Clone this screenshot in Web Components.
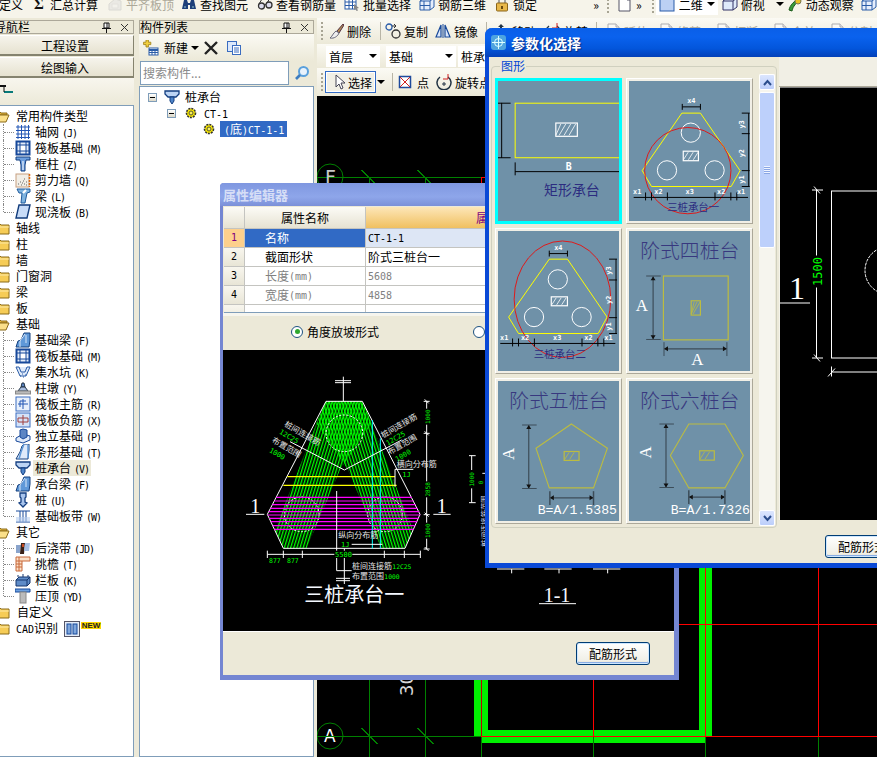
<!DOCTYPE html>
<html lang="zh">
<head>
<meta charset="utf-8">
<title>参数化选择</title>
<style>
  html, body { margin: 0; padding: 0; background: #ece9d8; overflow: hidden; }
  body { font: 12px "Noto Sans CJK SC", "Liberation Sans", sans-serif; color: #000; }
</style>
</head>
<body>
<app-frame>
  <top-bar slot="top">
    <tool-item style="margin-left:-1px">定义</tool-item>
    <tool-item icon="sigma" style="margin-left:8px">汇总计算</tool-item>
    <tool-item icon="flush" disabled style="margin-left:9px">平齐板顶</tool-item>
    <tool-item icon="binoculars" style="margin-left:7px">查找图元</tool-item>
    <tool-item icon="glasses" style="margin-left:9px">查看钢筋量</tool-item>
    <tool-item icon="batch" style="margin-left:8px">批量选择</tool-item>
    <tool-item icon="cube3d" style="margin-left:8px">钢筋三维</tool-item>
    <tool-item icon="lock" style="margin-left:8px">锁定</tool-item>
    <tool-item style="margin-left:56px">»</tool-item>
    <tool-grip style="margin-left:8px"></tool-grip>
    <tool-item icon="doc" style="margin-left:7px"></tool-item>
    <tool-item style="margin-left:4px">»</tool-item>
    <tool-grip style="margin-left:10px"></tool-grip>
    <combo-box icon="plane" width="62" style="margin-left:2px">二维</combo-box>
    <tool-item icon="view" style="margin-left:4px">俯视<drop-arrow style="margin-left:8px"></drop-arrow></tool-item>
    <tool-item icon="orbit" style="margin-left:3px">动态观察</tool-item>
    <tool-item icon="cube3d" style="margin-left:7px"></tool-item>
  </top-bar>

  <dock-panel slot="nav" heading="导航栏" clipped>
    <nav-button>工程设置</nav-button>
    <nav-button>绘图输入</nav-button>
    <mini-bar><app-icon name="rows" style="margin-left:-1px"></app-icon></mini-bar>
    <tree-view nav>
      <tree-row folder open>常用构件类型</tree-row>
      <tree-row icon="axis" hot="J" link>轴网</tree-row>
      <tree-row icon="raft" hot="M" link>筏板基础</tree-row>
      <tree-row icon="column" hot="Z" link>框柱</tree-row>
      <tree-row icon="wall" hot="Q" link>剪力墙</tree-row>
      <tree-row icon="beam" hot="L" link>梁</tree-row>
      <tree-row icon="slab" hot="B" link last>现浇板</tree-row>
      <tree-row folder>轴线</tree-row>
      <tree-row folder>柱</tree-row>
      <tree-row folder>墙</tree-row>
      <tree-row folder>门窗洞</tree-row>
      <tree-row folder>梁</tree-row>
      <tree-row folder>板</tree-row>
      <tree-row folder open>基础</tree-row>
      <tree-row icon="footbeam" hot="F" link>基础梁</tree-row>
      <tree-row icon="raft" hot="M" link>筏板基础</tree-row>
      <tree-row icon="sump" hot="K" link>集水坑</tree-row>
      <tree-row icon="pier" hot="Y" link>柱墩</tree-row>
      <tree-row icon="rebarmain" hot="R" link>筏板主筋</tree-row>
      <tree-row icon="rebarneg" hot="X" link>筏板负筋</tree-row>
      <tree-row icon="isolated" hot="P" link>独立基础</tree-row>
      <tree-row icon="strip" hot="T" link>条形基础</tree-row>
      <tree-row icon="cap" hot="V" link active>桩承台</tree-row>
      <tree-row icon="footbeam" hot="F" link>承台梁</tree-row>
      <tree-row icon="pile" hot="U" link>桩</tree-row>
      <tree-row icon="band" hot="W" link last>基础板带</tree-row>
      <tree-row folder open>其它</tree-row>
      <tree-row icon="postcast" hot="JD" link>后浇带</tree-row>
      <tree-row icon="eave" hot="T" link>挑檐</tree-row>
      <tree-row icon="rail" hot="K" link>栏板</tree-row>
      <tree-row icon="coping" hot="YD" link last>压顶</tree-row>
      <tree-row folder><span style="margin-left:1px">自定义</span></tree-row>
      <tree-row folder><mono-text>CAD</mono-text>识别<app-icon name="panels" style="margin:0 0 0 6px;vertical-align:-4px"></app-icon><new-badge></new-badge></tree-row>
    </tree-view>
  </dock-panel>

  <dock-panel slot="list" heading="构件列表">
    <list-tools></list-tools>
    <search-box>搜索构件...</search-box>
    <tree-view boxed>
      <tree-row icon="cap" box style="--indent:8px">桩承台</tree-row>
      <tree-row icon="gear" box style="--indent:27px"><mono-text>CT-1</mono-text></tree-row>
      <tree-row icon="gear" selected style="--indent:61px"><mono-text>(</mono-text>底<mono-text style="margin-left:-6px">)CT-1-1</mono-text></tree-row>
    </tree-view>
  </dock-panel>

  <tool-row slot="work" h="26">
    <tool-grip style="margin-left:4px"></tool-grip>
    <tool-item icon="brush" style="margin-left:5px">删除</tool-item>
    <tool-sep style="margin-left:9px"></tool-sep>
    <tool-item icon="copyrings" style="margin-left:4px">复制</tool-item>
    <tool-item icon="mirror" style="margin-left:7px">镜像</tool-item>
    <tool-sep style="margin-left:8px"></tool-sep>
    <tool-item icon="moveit" style="margin-left:6px">移动</tool-item>
    <tool-item icon="rotate" style="margin-left:9px">旋转</tool-item>
    <tool-sep style="margin-left:8px"></tool-sep>
    <tool-item icon="doc" disabled style="margin-left:8px">延伸</tool-item>
    <tool-item icon="doc" disabled style="margin-left:10px">修剪</tool-item>
    <tool-item icon="doc" disabled style="margin-left:14px">打断</tool-item>
    <tool-item icon="doc" disabled style="margin-left:14px">合并</tool-item>
    <tool-item icon="doc" disabled style="margin-left:14px">分割</tool-item>
  </tool-row>
  <tool-row slot="work" h="24">
    <combo-box width="54" style="margin-left:9px">首层</combo-box>
    <combo-box width="70" style="margin-left:6px">基础</combo-box>
    <combo-box width="70" style="margin-left:2px">桩承台</combo-box>
  </tool-row>
  <tool-row slot="work" h="28">
    <tool-grip style="margin-left:4px"></tool-grip>
    <tool-item icon="cursor" pressed style="margin-left:2px">选择</tool-item>
    <drop-arrow style="margin-left:1px"></drop-arrow>
    <tool-sep style="margin-left:7px"></tool-sep>
    <tool-item icon="point" style="margin-left:4px"><span style="margin-left:1px">点</span></tool-item>
    <tool-item icon="rotate" style="margin-left:7px">旋转点</tool-item>
  </tool-row>
  <cad-plan slot="canvas"></cad-plan>

  <float-window slot="windows" heading="属性编辑器" style="left:220px;top:183px;width:459px;height:497px">
    <prop-table></prop-table>
    <radio-bar></radio-bar>
    <section-drawing></section-drawing>
    <action-bar><push-button style="margin-left:353px">配筋形式</push-button></action-bar>
  </float-window>

  <float-window slot="windows" active heading="参数化选择" style="left:485px;top:28px;width:410px;height:540px">
    <param-body>
      <shape-tile slot="tile" kind="rect" selected></shape-tile>
      <shape-tile slot="tile" kind="tri1"></shape-tile>
      <shape-tile slot="tile" kind="tri2"></shape-tile>
      <shape-tile slot="tile" kind="four"></shape-tile>
      <shape-tile slot="tile" kind="five"></shape-tile>
      <shape-tile slot="tile" kind="six"></shape-tile>
      <side-drawing slot="side"></side-drawing>
      <push-button slot="action" style="margin-left:46px">配筋形式</push-button>
    </param-body>
  </float-window>
</app-frame>

<script>
const ICONS = {
  sigma: `<text x="3" y="13" font-family="Liberation Serif" font-weight="bold" font-size="15" fill="#111">Σ</text>`,
  flush: `<path d="M2 14V8l6-5 6 2v9z" fill="#ddd" stroke="#bbb"/><path d="M5 8h6v4H5z" fill="#eee" stroke="#ccc"/>`,
  binoculars: `<path d="M1 13l2-9h3l1 3h2l1-3h3l2 9h-6V9H7v4z" fill="#1d3f7a"/><path d="M3 11h2M11 11h2" stroke="#9cc" />`,
  glasses: `<circle cx="4.500" cy="10" r="3" fill="#dde" stroke="#333" stroke-width="1.300"/><circle cx="12" cy="9" r="3" fill="#dde" stroke="#333" stroke-width="1.300"/><path d="M7 9l2-.500M2 8l3-5M10 7l3-5" stroke="#333"/>`,
  batch: `<rect x="1" y="2" width="11" height="11" fill="#fff" stroke="#2a5ca8"/><path d="M1 6h11M1 9.500h11M5 2v11M8.500 2v11" stroke="#2a5ca8"/><path d="M10 8l5 4-2 .500 1 2-1.500.500-1-2-1.500 1z" fill="#888"/>`,
  cube3d: `<path d="M1 5l5-3h9v9l-4 3H1z" fill="#e6eefc" stroke="#2a5ca8"/><path d="M1 5h10v9M11 5l4-3M5 5v9M1 9.500h10" stroke="#2a5ca8" fill="none"/>`,
  lock: `<path d="M5 7V4a3 3 0 0 1 6 0v3" fill="none" stroke="#888" stroke-width="1.500"/><rect x="2.500" y="7" width="11" height="8" rx="1" fill="#e8b84a" stroke="#8a6418"/><rect x="7" y="10" width="2" height="3" fill="#6a4a10"/>`,
  doc: `<path d="M3 1h8l3 3v11H3z" fill="#fff" stroke="#556"/><path d="M11 1v3h3" fill="#dde" stroke="#556"/>`,
  plane: `<rect x="1" y="1" width="14" height="14" fill="#bcd0f4" stroke="#2a5ca8"/>`,
  view: `<path d="M1 5l4-3h10v9l-4 3H1z" fill="#dfeafa" stroke="#336"/><path d="M1 5h10v9M11 5l4-3" stroke="#336" fill="none"/>`,
  orbit: `<path d="M2 14c1-5 5-9 11-12l1 2C9 7 6 10 5 15z" fill="#3a9a3a" stroke="#1a5a1a"/><circle cx="11" cy="5" r="3" fill="#e8c020" stroke="#775"/>`,
  rows: `<path d="M0 1h7v2H0z" fill="#111"/><path d="M5 7h9v2H5z" fill="#087a7a"/><path d="M5 3v5" stroke="#111"/>`,
  axis: `<path d="M3 1v14M6.500 1v14M10 1v14M13.500 1v14M1 3h14M1 6.500h14M1 10h14M1 13.500h14" stroke="#2356b4" fill="none"/>`,
  raft: `<rect x="1.500" y="1.500" width="13" height="13" fill="#e4ecf8" stroke="#17489a" stroke-width="2"/><rect x="5" y="5" width="6" height="6" fill="#fff" stroke="#17489a"/><path d="M5 1v4M11 1v4M5 11v4M11 11v4M1 5h4M1 11h4M11 5h4M11 11h4" stroke="#17489a"/>`,
  column: `<path d="M1 1h14v3h-4l-1 5v6H6V9L5 4H1z" fill="#6c9ede" stroke="#133e80"/><path d="M7 5h2v9H7z" fill="#b8d0f0"/>`,
  wall: `<rect x="1" y="2" width="13" height="13" fill="#f2eee6" stroke="#c8a080"/><path d="M3 12h1M6 13h1M5 10h1M8 9h1M9 12h1M11 10h1M7 11h1M11 13h1M9 7h1" stroke="#666"/><path d="M14.500 2v13" stroke="#e06a10" stroke-width="1.500" stroke-dasharray="2 1"/>`,
  beam: `<path d="M2 1h13v3l-3 1-2 10H6l1-10H4z" fill="#7fb4e0" stroke="#1f5a9c"/><path d="M8 5l3-3" stroke="#fff" stroke-width="2"/>`,
  slab: `<path d="M4 1h11l-3 13H1z" fill="#c8dcf8" stroke="#123c7c" stroke-width="1.400"/>`,
  footbeam: `<path d="M1 15l2-6 3-1 3-7h6v7l-1 7z" fill="#5f98d8" stroke="#14407e"/><path d="M5 15V9l5-7M11 3v8" stroke="#d8e8fa" fill="none"/>`,
  sump: `<path d="M1 3h3l2 5h4l2-5h3M1 3l4 9h6l4-9" fill="#dfeafa" stroke="#2a5ca8"/><path d="M5 12h1M8 13h1M10 11h1M7 10h1" stroke="#2a5ca8"/>`,
  pier: `<path d="M6 7l1-4h2l1 4z" fill="#5b85c4" stroke="#234"/><path d="M3 11l3-4h4l3 4z" fill="#a8bde0" stroke="#234"/><rect x="0.500" y="11" width="15" height="3" fill="#bbb" stroke="#888"/>`,
  rebarmain: `<rect x="1" y="1" width="14" height="14" fill="#e8f0fb" stroke="#3a6cc0"/><path d="M8 3v10M3 8h10M5 5v6M5 5h6" stroke="#2356b4" fill="none"/>`,
  rebarneg: `<rect x="1" y="1" width="14" height="14" fill="#d4e2f8" stroke="#3a6cc0"/><path d="M8 3v10M3 6h10M3 10h10M3 6v4M13 6v4" stroke="#a04040" fill="none"/>`,
  isolated: `<path d="M1 10l7-4 7 2v4l-7 3-7-2z" fill="#dfeafa" stroke="#17489a"/><path d="M5 2l3-1 4 1v7l-4 2-3-2z" fill="#5b85c4" stroke="#17489a"/>`,
  strip: `<path d="M1 15l4-7 2-6 2-2h5v6l-1 9z" fill="#dfeafa" stroke="#14407e"/><path d="M9 0l-3 8-2 7M13 1v13" stroke="#5f98d8" stroke-width="1.500" fill="none"/>`,
  cap: `<path d="M1 2h14v3l-3 3H4L1 5z" fill="#bcd4f4" stroke="#133e80" stroke-width="1.300"/><path d="M6 8h4v4l-2 3-2-3z" fill="#4e84c8" stroke="#133e80"/>`,
  pile: `<path d="M5 1h6v4l-1 1v4l2 1-4 4-4-4 2-1V6L5 5z" fill="#a8c4ec" stroke="#133e80" stroke-width="1.300"/>`,
  band: `<path d="M1 3h14M1 14h14" stroke="#17489a"/><path d="M5 3v11M8 3v11M11 3v11" stroke="#17489a"/><rect x="1" y="9" width="14" height="5" fill="#b8cff0" opacity=".6"/>`,
  postcast: `<path d="M1 5h5l-1 8H1z" fill="#8aa4cc"/><path d="M6 3h4l-1 11H5z" fill="#3a2016"/><path d="M7 4h2v3H7z" fill="#c84a20"/><path d="M10 3h5l-1 8h-5z" fill="#a8c0e4"/>`,
  eave: `<path d="M1 1h14v4H7v10H1z" fill="#fbe0c8" stroke="#c8683a"/><path d="M1 5h6M1 8h6M1 11h6M4 1v14" stroke="#c8683a"/>`,
  rail: `<path d="M1 8l3-3h11v6l-3 3H1z" fill="#5f8cc8" stroke="#17366e"/><path d="M1 8h11v6M12 8l3-3" stroke="#17366e" fill="none"/><path d="M3 5V3M8 5V2M13 5V3" stroke="#17366e"/>`,
  coping: `<path d="M0 1h15v3H0z" fill="#6ca0e0" stroke="#17489a"/><rect x="5" y="4" width="6" height="11" fill="#bbb" stroke="#888"/>`,
  gear: `<circle cx="8" cy="8" r="4.500" fill="#f8e800" stroke="#333" stroke-dasharray="2 1" stroke-width="1.600"/><circle cx="8" cy="8" r="2" fill="#f8f060" stroke="#553"/>`,
  panels: `<rect x="0.500" y="0.500" width="15" height="15" fill="#e4ecf8" stroke="#556"/><rect x="3" y="3" width="4" height="10" fill="#7ea6dc" stroke="#17489a"/><rect x="9" y="3" width="4" height="10" fill="#7ea6dc" stroke="#17489a"/>`,
  addnew: `<path d="M2 4h3V1h3v3h3v3H8v3H5V7H2z" fill="#f2d040" stroke="#9a7c10" transform="translate(-1 -1) scale(.8)"/><rect x="6" y="8" width="9" height="7" fill="#fff" stroke="#2a5ca8"/><path d="M6 10h9" stroke="#2a5ca8" stroke-width="2"/><path d="M9 10v5M12 10v5M6 12.500h9" stroke="#2a5ca8"/>`,
  del: `<path d="M2 2l12 12M14 2L2 14" stroke="#222" stroke-width="2.400"/>`,
  copydoc: `<rect x="1.500" y="1.500" width="9" height="10" fill="#dce8fb" stroke="#3a6cc0"/><rect x="6.500" y="5.500" width="8" height="9" fill="#fff" stroke="#3a6cc0"/><path d="M8 8h5M8 10h5M8 12h5" stroke="#3a6cc0"/>`,
  search: `<circle cx="9.500" cy="6.500" r="4.500" fill="#e8f2fc" stroke="#5aa0dc" stroke-width="2"/><path d="M6 10l-4 4" stroke="#3c7cc0" stroke-width="2.600"/>`,
  brush: `<path d="M9 8l6-7 1 1-5 8z" fill="#b08a50" stroke="#534"/><path d="M2 15c2-1 3-5 6-7l3 2c-1 3-5 6-9 5z" fill="#eee" stroke="#667"/>`,
  copyrings: `<circle cx="4" cy="4" r="3" fill="none" stroke="#2a5ca8" stroke-width="1.300"/><circle cx="11" cy="11" r="4" fill="none" stroke="#333" stroke-width="1.300"/><path d="M7 3h4l-2-2M11 3l-2 2" stroke="#333" fill="none"/>`,
  mirror: `<path d="M1 14L6 2v12zM15 14L10 2v12z" fill="#dce8fb" stroke="#17489a" stroke-width="1.200"/><path d="M8 1v14" stroke="#17489a"/>`,
  moveit: `<path d="M8 1l3 3H9v8h2l-3 3-3-3h2V4H5z" fill="#234"/>`,
  rotate: `<path d="M4 3a7 7 0 1 0 8 0" fill="none" stroke="#234" stroke-width="1.500"/><path d="M8 8v4M6 10h4" stroke="#234"/><path d="M12 0v5H7" fill="none" stroke="#d02020"/>`,
  cursor: `<path d="M4 1v12l3-3 2 5 2-1-2-5h4z" fill="#fff" stroke="#445"/>`,
  point: `<rect x="2.500" y="2.500" width="11" height="11" fill="#fff" stroke="#1f4a9c" stroke-width="1.500"/><path d="M3 3l10 10M13 3L3 13" stroke="#d02020"/>`
};

class AppIcon extends HTMLElement {
  connectedCallback() {
    const size = this.getAttribute("size") || 16;
    const name = this.getAttribute("name");
    this.attachShadow({mode: "open"}).innerHTML = `
      <style>:host{display:inline-block;width:${size}px;height:${size}px;flex:none} svg{display:block}</style>
      <svg width="${size}" height="${size}" viewBox="0 0 16 16">${ICONS[name] || ""}</svg>`;
  }
}

class MonoText extends HTMLElement {
  constructor(){
    super();
    this.attachShadow({mode: "open"}).innerHTML = `
      <style>:host{font:10px "DejaVu Sans Mono", monospace}</style><slot></slot>`;
  }
}

class NewBadge extends HTMLElement {
  constructor(){
    super();
    this.attachShadow({mode: "open"}).innerHTML = `
      <style>:host{display:inline-block;vertical-align:5px;margin-left:1px;background:#ffd800;width:20px;text-align:center;
        font:bold 8px/7px "Liberation Sans",sans-serif;color:#222}</style>NEW`;
  }
}

class AppFrame extends HTMLElement {
  constructor(){
    super();
    this.attachShadow({mode: "open"}).innerHTML = `
      <style>
        :host{display:flex;flex-direction:column;width:877px;height:757px;position:relative;overflow:hidden;background:#ece9d8}
        .main{display:flex;height:739px}
        .nav{width:134px;flex:none;display:flex}
        .list{width:175px;margin-left:5px;flex:none;display:flex}
        .work{flex:1;margin-left:3px;border-left:0;display:flex;flex-direction:column;min-width:0;background:#f6f4ea}
        .canvas{flex:1;min-height:0}
      </style>
      <slot name="top"></slot>
      <div class="main">
        <div class="nav"><slot name="nav"></slot></div>
        <div class="list"><slot name="list"></slot></div>
        <div class="work"><slot name="work"></slot><div class="canvas"><slot name="canvas"></slot></div></div>
      </div>
      <slot name="windows"></slot>`;
  }
}

class TopBar extends HTMLElement {
  constructor(){
    super();
    this.attachShadow({mode: "open"}).innerHTML = `
      <style>
        :host{display:block;height:18px;overflow:hidden;background:#f6f4ea}
        .row{display:flex;align-items:center;height:18px;margin-top:-5px;white-space:nowrap}
      </style><div class="row"><slot></slot></div>`;
  }
}

class ToolRow extends HTMLElement {
  connectedCallback(){
    this.attachShadow({mode: "open"}).innerHTML = `
      <style>
        :host{display:flex;align-items:center;height:${this.getAttribute("h")}px;white-space:nowrap;overflow:hidden;
          background:linear-gradient(#fbfaf4,#ece9d8)}
      </style><slot></slot>`;
  }
}

class ToolItem extends HTMLElement {
  connectedCallback(){
    const icon = this.getAttribute("icon");
    this.attachShadow({mode: "open"}).innerHTML = `
      <style>
        :host{display:inline-flex;align-items:center;gap:3px;flex:none}
        :host([disabled]){color:#aca899}
        :host([disabled]) app-icon{opacity:.45}
        :host([pressed]){border:1px solid #316ac5;background:#f1efe5;height:20px;padding:0 3px 0 6px;gap:0;box-shadow:inset 0 0 0 1px #fff}
      </style>
      ${icon ? `<app-icon name="${icon}"></app-icon>` : ""}<slot></slot>`;
  }
}

class ToolGrip extends HTMLElement {
  constructor(){
    super();
    this.attachShadow({mode: "open"}).innerHTML = `
      <style>:host{display:block;width:2px;height:18px;flex:none;
        background:repeating-linear-gradient(#a8a594 0 2px,transparent 2px 4px)}</style>`;
  }
}

class ToolSep extends HTMLElement {
  constructor(){
    super();
    this.attachShadow({mode: "open"}).innerHTML = `
      <style>:host{display:block;width:1px;height:18px;flex:none;background:#b8b5a6}</style>`;
  }
}

class DropArrow extends HTMLElement {
  constructor(){
    super();
    this.attachShadow({mode: "open"}).innerHTML = `
      <style>:host{display:inline-block;width:0;height:0;flex:none;border:4px solid transparent;border-top-color:#000;border-bottom:0}</style>`;
  }
}

class ComboBox extends HTMLElement {
  connectedCallback(){
    const icon = this.getAttribute("icon");
    this.attachShadow({mode: "open"}).innerHTML = `
      <style>
        :host{display:flex;align-items:center;gap:4px;height:21px;width:${this.getAttribute("width")}px;
          box-sizing:border-box;padding:0 3px;background:#fff;flex:none;position:relative}
        .t{flex:1;overflow:hidden}
        drop-arrow{margin-right:0}
      </style>
      ${icon ? `<app-icon name="${icon}"></app-icon>` : ""}<div class="t"><slot></slot></div><drop-arrow></drop-arrow>`;
  }
}

class DockPanel extends HTMLElement {
  connectedCallback(){
    const clipped = this.hasAttribute("clipped");
    this.attachShadow({mode: "open"}).innerHTML = `
      <style>
        :host{display:flex;flex-direction:column;width:100%;padding-top:2px;box-sizing:border-box}
        .head{display:flex;align-items:center;height:14px;border:1px solid #aca899;border-left:${clipped ? 0 : "1px solid #aca899"};
          background:#ece9d8;box-sizing:border-box;padding:0 4px 0 0;overflow:hidden;flex:none;line-height:12px;white-space:nowrap}
        .title{flex:1;margin-left:${clipped ? -6 : 0}px}
        svg{display:block;margin-left:9px}
      </style>
      <div class="head"><span class="title">${this.getAttribute("heading")}</span>
        <svg width="9" height="11" viewBox="0 0 9 11"><path d="M2 1h5v5H2zM0 6.500h9M4.500 7v4" fill="#fff" stroke="#111"/><path d="M5 1v5" stroke="#111"/></svg>
        <svg width="9" height="9" viewBox="0 0 9 9"><path d="M1 1l7 7M8 1L1 8" stroke="#333"/></svg>
      </div>
      <slot></slot>`;
  }
}

class NavButton extends HTMLElement {
  constructor(){
    super();
    this.attachShadow({mode: "open"}).innerHTML = `
      <style>
        :host{display:flex;align-items:center;justify-content:center;height:21px;margin-top:1px;box-sizing:border-box;flex:none;
          padding-right:3px;background:linear-gradient(#f6f4ec,#e6e2d0);border:1px solid #fff;border-left:0;border-right-color:#85836f;border-bottom:2px solid #85836f;letter-spacing:0}
      </style><slot></slot>`;
  }
}

class MiniBar extends HTMLElement {
  constructor(){
    super();
    this.attachShadow({mode: "open"}).innerHTML = `
      <style>:host{display:flex;align-items:flex-end;height:27px;flex:none;box-sizing:border-box;padding-bottom:5px;background:linear-gradient(#f8f6ee,#ece9d8)}</style><slot></slot>`;
  }
}

class TreeView extends HTMLElement {
  constructor(){
    super();
    this.attachShadow({mode: "open"}).innerHTML = `
      <style>
        :host{display:block;flex:1;background:#fff;border:1px solid #7f9db9;border-left:0;box-sizing:border-box;overflow:hidden;white-space:nowrap}
        :host([boxed]){border-left:1px solid #7f9db9;padding-top:2px}
        :host([nav]){padding-top:2px}
      </style><slot></slot>`;
  }
}

class TreeRow extends HTMLElement {
  connectedCallback(){
    const icon = this.getAttribute("icon");
    const hot = this.getAttribute("hot");
    const folder = this.hasAttribute("folder");
    const open = this.hasAttribute("open");
    let lead = "";
    if (this.hasAttribute("box")) lead += `<i class="box"></i>`;
    if (folder) {
      lead += `<svg class="fold" width="16" height="13" viewBox="0 0 16 13">
        ${open
          ? `<path d="M1 2h5l1 1h6v2H4L1 12z" fill="#e8b83c" stroke="#8a6a18"/><path d="M4 5h11l-3 7H1z" fill="#fbe08a" stroke="#8a6a18"/>`
          : `<path d="M1 2h5l1 1h8v9H1z" fill="#f6cc56" stroke="#8a6a18"/><path d="M2 5h13" stroke="#fdeaa8"/>`}
      </svg>`;
    }
    if (icon) lead += `<app-icon name="${icon}"></app-icon>`;
    this.attachShadow({mode: "open"}).innerHTML = `
      <style>
        :host{display:block;height:16px}
        .row{display:flex;align-items:center;height:16px;gap:5px;padding-left:var(--indent,0);position:relative;line-height:16px}
        :host([link]) .row{padding-left:15px;gap:4px}
        :host([folder]) .row{gap:6px}
        .fold{margin-left:-6px;flex:none}
        .box{width:9px;height:9px;box-sizing:border-box;border:1px solid #7f9db9;background:linear-gradient(#fff,#dcd8c8);margin-right:2px;flex:none;position:relative}
        .box::after{content:"";position:absolute;left:1px;right:1px;top:3px;height:1px;background:#000}
        :host([link]) .row::before{content:"";position:absolute;left:3px;top:0;bottom:0;border-left:1px dotted #888}
        :host([link][last]) .row::before{bottom:8px}
        :host([link]) .row::after{content:"";position:absolute;left:4px;top:8px;width:10px;border-top:1px dotted #888}
        :host([active]) .label{background:#ece9d8;padding:0 2px;margin-left:-2px}
        :host([selected]) .label{background:#316ac5;color:#fff;padding:0 4px;margin-left:-2px;width:59px;overflow:hidden;white-space:nowrap}
        .hot{font:10px "DejaVu Sans Mono",monospace;letter-spacing:-1px;margin-left:3px}
        .label{display:inline-block;height:16px}
      </style>
      <div class="row">${lead}<span class="label"><slot></slot>${hot ? `<span class="hot">(${hot})</span>` : ""}</span></div>`;
  }
}

class ListTools extends HTMLElement {
  constructor(){
    super();
    this.attachShadow({mode: "open"}).innerHTML = `
      <style>
        :host{display:flex;align-items:center;height:27px;flex:none;padding-left:4px;background:linear-gradient(#fbfaf4,#ece9d8)}
        .t{margin-left:5px}
        drop-arrow{margin:0 4px 0 3px}
        app-icon + app-icon{margin-left:7px}
      </style>
      <app-icon name="addnew"></app-icon><span class="t">新建</span><drop-arrow></drop-arrow>
      <app-icon name="del"></app-icon><app-icon name="copydoc"></app-icon>`;
  }
}

class SearchBox extends HTMLElement {
  constructor(){
    super();
    this.attachShadow({mode: "open"}).innerHTML = `
      <style>
        :host{display:flex;height:24px;flex:none;background:#ece9d8;margin-bottom:1px}
        .in{width:149px;margin-left:1px;box-sizing:border-box;border:1px solid #7f9db9;background:#fff;color:#8a8a8a;padding-left:2px;line-height:21px}
        .go{flex:1;display:flex;align-items:center;justify-content:center}
      </style>
      <div class="in"><slot></slot></div><div class="go"><app-icon name="search"></app-icon></div>`;
  }
}

class FloatWindow extends HTMLElement {
  connectedCallback(){
    const active = this.hasAttribute("active");
    this.attachShadow({mode: "open"}).innerHTML = `
      <style>
        :host{position:absolute;display:flex;flex-direction:column;box-sizing:border-box;background:#ece9d8;
          border:solid #7486d2;border-width:0 5px 5px 3px;border-radius:4px 4px 0 0}
        :host([active]){border-color:#0a49d6;border-width:0 4px 5px 4px;border-radius:7px 7px 0 0;box-shadow:inset 0 0 0 0 #000}
        .title{flex:none;height:23px;display:flex;align-items:center;margin:0 -5px 0 -3px;padding-left:3px;
          background:linear-gradient(#7f97e0,#8ea6ea 60%,#7b90d8);color:#d6def6;font-weight:bold;font-size:13px;border-radius:4px 4px 0 0}
        :host([active]) .title{height:29px;margin:0 -4px;padding-left:6px;gap:5px;
          background:linear-gradient(#0a5fe8,#0a62ee 30%,#0356dc 70%,#0340b8);color:#fff;font-size:14px;text-shadow:1px 1px 1px #0a2a80;border-radius:7px 7px 0 0}
        .body{flex:1;min-height:0;display:flex;flex-direction:column}
        svg{flex:none}
      </style>
      <div class="title">
        ${active ? `<svg width="15" height="15" viewBox="0 0 15 15"><rect width="15" height="15" rx="3" fill="#4ea4e0"/><circle cx="7.500" cy="7.500" r="4" fill="none" stroke="#dff"/><path d="M7.500 1v13M1 7.500h13" stroke="#dff"/></svg>` : ""}
        <span>${this.getAttribute("heading")}</span>
      </div>
      <div class="body"><slot></slot></div>`;
  }
}

class PropTable extends HTMLElement {
  static get rows(){
    return [
      ["1", "名称", "<mono-text>CT-1-1</mono-text>", "on"],
      ["2", "截面形状", "阶式三桩台一", ""],
      ["3", "长度<mono-text>(mm)</mono-text>", "<mono-text>5608</mono-text>", "dim"],
      ["4", "宽度<mono-text>(mm)</mono-text>", "<mono-text>4858</mono-text>", "dim"],
      ["5", "高度<mono-text>(mm)</mono-text>", "<mono-text>1200</mono-text>", "dim cut"]
    ];
  }
  connectedCallback(){
    const body = PropTable.rows.map(([n, k, v, cls]) => `
      <div class="idx ${cls}">${n}</div><div class="key ${cls}">${k}</div><div class="val ${cls}">${v}</div>`).join("");
    this.attachShadow({mode: "open"}).innerHTML = `
      <style>
        :host{display:block;height:105px;flex:none;margin-left:1px;overflow:hidden;background:#fff;border-bottom:1px solid #7f9db9;margin-top:1px}
        .grid{display:grid;grid-template-columns:21px 121px 1fr;grid-auto-rows:19px}
        .grid > div{border:solid #c4c4c0;border-width:0 1px 1px 0;box-sizing:border-box;display:flex;align-items:center;line-height:18px;white-space:nowrap}
        .hd{height:22px;margin-bottom:0;background:linear-gradient(#fcfbf6,#e6e2d2);justify-content:center}
        .hd.sel{background:linear-gradient(#fde6b8,#f0c060);color:#800080;justify-content:flex-start;padding-left:110px}
        .idx{background:linear-gradient(#f8f6ee,#e8e5d6);justify-content:center;font:10px "DejaVu Sans Mono",monospace}
        .idx.on{background:#fdd08c;color:#800080}
        .key{padding-left:20px}
        .key.on{background:#316ac5;color:#fff}
        .val{padding-left:2px}
        .val.on{background:#dde6f5}
        .dim:not(.idx){color:#808080}
        .grid > .cut{padding-top:9px;color:#808080}
      </style>
      <div class="grid" style="grid-template-rows:22px">
        <div class="hd"></div><div class="hd">属性名称</div><div class="hd sel">属性值</div>
        ${body}
      </div>`;
  }
}

class RadioBar extends HTMLElement {
  constructor(){
    super();
    this.attachShadow({mode: "open"}).innerHTML = `
      <style>
        :host{display:flex;align-items:center;height:37px;flex:none;box-sizing:border-box;padding:0 0 3px 68px;background:#ece9d8;border-top:3px solid #f6f5ee}
        .r{width:12px;height:12px;box-sizing:border-box;border-radius:50%;border:1px solid #1c5180;background:#fff;flex:none;display:flex;align-items:center;justify-content:center}
        .r.on::after{content:"";width:5px;height:5px;border-radius:50%;background:#2fa82f}
        .t{margin:0 94px 0 4px}
      </style>
      <span class="r on"></span><span class="t">角度放坡形式</span><span class="r"></span>`;
  }
}

class PushButton extends HTMLElement {
  constructor(){
    super();
    this.attachShadow({mode: "open"}).innerHTML = `
      <style>
        :host{display:flex;align-items:center;justify-content:center;width:74px;height:23px;box-sizing:border-box;flex:none;
          border:1px solid #003c74;border-radius:3px;background:linear-gradient(#fff,#f0efe6 85%,#dcd8c8);
          box-shadow:inset 0 0 0 1px #cee7ff,inset 0 -1px 0 1px #89ade4}
      </style><slot></slot>`;
  }
}

class ActionBar extends HTMLElement {
  constructor(){
    super();
    this.attachShadow({mode: "open"}).innerHTML = `
      <style>:host{display:flex;align-items:center;flex:1;background:#ece9d8;border-top:1px solid #fff}</style><slot></slot>`;
  }
}

/* drawing helpers, all coordinates in the svg's own units */
const ln = (x1, y1, x2, y2, c, w = 1, extra = "") =>
  `<line x1="${x1}" y1="${y1}" x2="${x2}" y2="${y2}" stroke="${c}" stroke-width="${w}" ${extra}/>`;
const tx = (x, y, s, fill, size, extra = "") =>
  `<text x="${x}" y="${y}" fill="${fill}" font-size="${size}" ${extra}>${s}</text>`;
const poly = (pts, c, w = 1, fill = "none", extra = "") =>
  `<polygon points="${pts}" stroke="${c}" stroke-width="${w}" fill="${fill}" ${extra}/>`;
const SANS = `font-family="Noto Sans CJK SC"`;
const MONO = `font-family="DejaVu Sans Mono"`;

class CadPlan extends HTMLElement {
  connectedCallback(){
    const G = "#008000", R = "#ff0000", B = "#00f000";
    this.attachShadow({mode: "open"}).innerHTML = `
      <style>:host{display:block;width:100%;height:100%;background:#000;border-left:0} svg{display:block}</style>
      <svg width="560" height="661" viewBox="317 96 560 661" shape-rendering="crispEdges">
        <rect x="317" y="96" width="560" height="661" fill="#000"/>
        ${ln(317, 177.5, 481, 177.5, G)}
        ${ln(481.5, 177, 481.5, 184, R)}
        ${ln(481, 177.5, 486, 177.5, R)}
        ${[369.5, 425.5].map(x => ln(x, 177, x, 757, G) + ln(x - 8, 170, x + 5, 183, G) + ln(x - 8, 728, x + 8, 744, G)).join("")}
        <circle cx="330" cy="177" r="13" fill="none" stroke="${G}" shape-rendering="auto"/>
        ${tx(325, 184, "F", "#c8c8c8", 19, `font-family="DejaVu Sans"`)}
        <circle cx="330" cy="736" r="13" fill="none" stroke="${G}" shape-rendering="auto"/>
        ${tx(324, 742, "A", "#fff", 17, `font-family="DejaVu Sans" shape-rendering="auto"`)}
        ${tx(413, 696, "3000", "#d8d8d8", 18, `font-family="DejaVu Sans" transform="rotate(-90 413 696)"`)}
        <rect x="474" y="680" width="14" height="56" fill="${B}"/>
        <rect x="481.500" y="730" width="224" height="13" fill="${B}"/>
        <rect x="699" y="560" width="13" height="176" fill="${B}"/>
        <rect x="699" y="736" width="6.500" height="7" fill="${B}"/>
        ${ln(481.5, 680, 481.5, 736, "#c00000")}
        ${[593.5, 705.5, 818.5].map(x => ln(x, 560, x, 736, R)).join("")}
        ${ln(679, 624.5, 877, 624.5, R)}
        ${ln(481, 736.5, 877, 736.5, R)}
        ${ln(317, 736.5, 481, 736.5, G)}
        ${[481.5, 593.5, 705.5, 818.5].map(x => ln(x, 737, x, 757, G)).join("")}
      </svg>`;
  }
}

class SectionDrawing extends HTMLElement {
  connectedCallback(){
    const Y = "#ffff00", W = "#fff", C = "#00ffff", M = "#ff00ff", H = "#00ff00";
    const mag = [412, 423, 434, 445, 455, 465, 475, 485, 497, 508];
    const edge = y => y <= 463 ? 127 + (463 - y) * 0.519 : 127 + (y - 463) * 0.47;
    const band1 = "303,124 412,124 440,190 345,330 245,565 175,565 150,510 290,150";
    const band2 = "412,124 303,124 274,190 369,330 469,565 539,565 564,510 424,150";
    const wrap = (x, y, rot, inner) => `<g transform="translate(${x} ${y}) rotate(${rot})">${inner}</g>`;
    const cjk = (x, y, s, fill = "#e4e4e4", size = 24) => tx(x, y, s, fill, size, SANS);
    const num = (x, y, s, size = 21) => tx(x, y, s, H, size, MONO);
    const vnum = (x, y, s) => tx(x, y, s, H, 18, `${MONO} text-anchor="middle" transform="rotate(-90 ${x} ${y})"`);
    const ticks = [127, 175, 232, 478, 538, 586].map(x => ln(x, 572, x, 594, W, 3)).join("");
    const vticks = [124, 220, 464, 567].map(y => ln(596, y, 614, y, W, 3) + ln(599, y - 6, 611, y + 6, W, 3)).join("");
    this.attachShadow({mode: "open"}).innerHTML = `
      <style>:host{display:block;height:281px;flex:none;background:#000;overflow:hidden} svg{display:block}</style>
      <svg width="451" height="281" viewBox="-6 -30 1353 843">
        <defs>
          <pattern id="h1" width="9" height="9" patternUnits="userSpaceOnUse" patternTransform="rotate(17)"><rect width="4" height="9" fill="${H}"/></pattern>
          <pattern id="h2" width="9" height="9" patternUnits="userSpaceOnUse" patternTransform="rotate(-17)"><rect width="4" height="9" fill="${H}"/></pattern>
        </defs>
        <polygon points="${band1}" fill="url(#h1)"/>
        <polygon points="${band2}" fill="url(#h2)"/>
        ${[[358, 220], [230, 463], [480, 463]].map(([x, y]) => `<circle cx="${x}" cy="${y}" r="${y === 220 ? 55 : 52}" fill="none" stroke="${W}" stroke-width="3" stroke-dasharray="6 5"/>`).join("")}
        ${poly("303,124 412,124 585,463 540,565 175,565 127,463", W, 3)}
        ${mag.map(y => ln(edge(y), y, 714 - edge(y), y, M, 3.5)).join("")}
        ${ln(187, 350, 510, 350, Y, 3.5)}${ln(175, 376, 515, 376, Y, 3.5)}
        ${ln(442, 180, 442, 565, C, 3)}${ln(466, 235, 466, 565, C, 3)}
        ${ln(195, 245, 358, 330, W, 3)}${ln(358, 330, 530, 240, W, 3)}
        ${ln(355, 50, 355, 124, W, 3)}${ln(330, 62, 378, 62, W, 3)}${ln(330, 68, 378, 68, W, 3)}
        ${ln(335, 393, 335, 632, W, 3)}${ln(335, 632, 380, 632, W, 3)}
        ${ln(358, 565, 358, 672, W, 3)}${ln(333, 655, 375, 655, W, 3)}${ln(333, 662, 375, 662, W, 3)}
        ${ln(63, 463, 118, 463, W, 3)}${ln(625, 463, 677, 463, W, 3)}
        ${tx(76, 458, "1", W, 60, `font-family="Liberation Serif"`)}
        ${tx(635, 458, "1", W, 60, `font-family="Liberation Serif"`)}
        ${ln(127, 583, 586, 583, W, 3)}${ticks}
        <rect x="328" y="572" width="54" height="22" fill="#000"/>
        ${num(330, 591, "5500")}${num(132, 610, "877", 19.5)}${num(186, 610, "877", 19.5)}
        ${ln(605, 124, 605, 567, W, 3)}${vticks}
        ${[170, 388, 512].map((y, i) => `<rect x="598" y="${y - 24}" width="18" height="48" fill="#000"/>` + vnum(614, y, ["1000", "2858", "1000"][i])).join("")}
        ${wrap(180, 190, 30, cjk(0, 8, "桩间连接筋"))}
        ${wrap(165, 213, 30, num(0, 8, "12C25"))}
        ${wrap(143, 238, 30, cjk(0, 8, "布置范围"))}
        ${wrap(135, 268, 30, num(0, 8, "1000"))}
        ${wrap(470, 228, -30, cjk(0, 8, "桩间连接筋"))}
        ${wrap(484, 250, -30, num(0, 8, "12C25"))}
        ${wrap(490, 278, -30, cjk(0, 8, "布置范围"))}
        ${wrap(512, 298, -30, num(0, 8, "1000"))}
        ${ln(510, 328, 565, 328, W, 3)}${ln(510, 328, 510, 380, W, 3)}
        ${cjk(515, 322, "横向分布筋")}${num(532, 350, "1J")}
        ${cjk(340, 534, "纵向分布筋")}${num(348, 561, "1J")}
        ${ln(380, 553, 472, 553, W, 3)}
        ${cjk(381, 628, "桩间连接筋")}${num(502, 627, "12C25", 19)}
        ${cjk(381, 658, "布置范围")}${num(478, 657, "1000", 19)}
        ${tx(238, 726, "三桩承台一", "#f4f8ff", 60, SANS)}
        ${ln(740, 287, 740, 330, W, 3)}${ln(740, 385, 740, 428, W, 3)}${ln(732, 287, 752, 287, W, 3)}${ln(732, 428, 752, 428, W, 3)}
        ${vnum(746, 358, "1000")}${vnum(774, 367, "0")}
        ${ln(772, 340, 790, 340, W, 3)}
        ${tx(786, 560, "桩间连接筋范围", "#dde", 22, `${SANS} transform="rotate(-90 786 560)"`)}
        ${[816, 958, 1104].map(x => ln(x, 627, x + 82, 627, W, 3) + ln(x + 44, 627, x + 44, 640, W, 3)).join("")}
        ${tx(996, 726, "1-1", "#f4f8ff", 60, `font-family="Liberation Serif" text-anchor="middle"`)}
        ${ln(942, 731, 1053, 731, W, 3)}
      </svg>`;
  }
}

class SideDrawing extends HTMLElement {
  connectedCallback(){
    const W = "#fff";
    this.attachShadow({mode: "open"}).innerHTML = `
      <style>:host{display:block;width:100%;height:100%;background:#000} svg{display:block}</style>
      <svg width="110" height="433" viewBox="780 87.500 110 433">
        ${ln(780, 87.5, 890, 87.5, W)}
        ${ln(780, 303.5, 810, 303.5, W)}
        ${tx(789, 299, "1", "#fff", 32, `font-family="Liberation Serif"`)}
        ${ln(816.5, 190, 816.5, 256, W)}${ln(816.5, 288, 816.5, 358, W)}
        ${ln(812, 190.5, 823, 190.5, W)}${ln(812, 358.5, 823, 358.5, W)}
        ${ln(814, 187, 820, 194, W)}${ln(814, 355, 820, 362, W)}
        ${tx(822, 272, "1500", "#00ff00", 12, `${MONO} text-anchor="middle" transform="rotate(-90 822 272)"`)}
        <rect x="831.500" y="191.500" width="70" height="167" fill="none" stroke="${W}"/>
        <circle cx="889" cy="271" r="24" fill="none" stroke="${W}" stroke-dasharray="3 1"/>
        ${ln(831.5, 367, 831.5, 377, W)}${ln(832, 372.5, 889, 372.5, W)}${ln(828, 377, 835, 369, W)}
      </svg>`;
  }
}

class ShapeTile extends HTMLElement {
  connectedCallback(){
    this.attachShadow({mode: "open"}).innerHTML = `
      <style>
        :host{display:block;width:127px;height:146px;box-sizing:border-box;background:#ece9d8;
          border:1px solid #fff;border-right-color:#aca899;border-bottom-color:#aca899}
        :host([selected]){border-color:#00ffff}
        .in{box-sizing:border-box;width:100%;height:100%;padding:2px;background:#f1efe6}
        :host([selected]) .in{background:#00ffff}
        svg{display:block;background:#6f91a8}
      </style>
      <div class="in"><svg width="121" height="140" viewBox="0 0 122 141">${ShapeTile.art(this.getAttribute("kind"))}</svg></div>`;
  }

  static hatch(x, y, w, h, c = "#fff", vertical = false){
    let s = `<rect x="${x}" y="${y}" width="${w}" height="${h}" fill="none" stroke="${c}" stroke-width="1.200"/>`;
    const step = vertical ? 3 : 5;
    for (let i = x + step; i < x + w; i += step) {
      const x2 = Math.max(x, i - h * 0.5);
      s += ln(i, y + 1, x2, y + h - 1, c, 0.8);
    }
    return s;
  }

  static tri(o){
    const Y = "#ffff00", K = "#000", W = "#fff";
    const lab = (x, y, t, rot) => tx(x, y, t, W, 7, `${MONO} font-weight="bold" text-anchor="middle"${rot ? ` transform="rotate(-90 ${x} ${y})"` : ""}`);
    return `
      ${poly(o.outline, Y)}
      ${o.circles.map(([x, y]) => `<circle cx="${x}" cy="${y}" r="9.700" fill="none" stroke="${W}"/>`).join("")}
      ${ShapeTile.hatch(...o.box)}
      <ellipse cx="${o.red[0]}" cy="${o.red[1]}" rx="${o.red[2]}" ry="${o.red[3]}" fill="none" stroke="#e01818" stroke-width="1"/>
      ${ln(o.x4[0], o.x4[2], o.x4[1], o.x4[2], K)}${ln(o.x4[0], o.x4[2] - 3, o.x4[0], o.x4[2] + 3, K)}${ln(o.x4[1], o.x4[2] - 3, o.x4[1], o.x4[2] + 3, K)}
      ${lab((o.x4[0] + o.x4[1]) / 2, o.x4[2] - 4, "x4")}
      ${ln(o.rx, o.ry[0], o.rx, o.ry[3], K)}${o.ry.map(y => ln(o.rx - 7, y, o.rx + 1, y, K)).join("")}
      ${["y3", "y2", "y1"].map((t, i) => lab(o.rx - 5, (o.ry[i] + o.ry[i + 1]) / 2 + 1, t, true)).join("")}
      ${ln(o.bx[0], o.by, o.bx[1], o.by, K)}${o.bt.map(x => ln(x, o.by - 5, x, o.by + 3, K)).join("")}
      ${o.bl.map(([x, t]) => lab(x, o.by - 3, t)).join("")}
      ${tx(o.cap[0], o.cap[1], o.cap[2], "#2c2c80", 10.5, `${SANS} text-anchor="middle"`)}`;
  }

  static arrows(x1, y1, x2, y2){
    const c = "#3c4c58";
    const d = x1 === x2
      ? `<path d="M${x1} ${y1}l-2.500 4h5zM${x2} ${y2}l-2.500 -4h5z" fill="#111"/>`
      : `<path d="M${x1} ${y1}l4 -2.500v5zM${x2} ${y2}l-4 -2.500v5z" fill="#111"/>`;
    return ln(x1, y1, x2, y2, c, 1.2) + d;
  }

  static head(t){
    return tx(61.3, 27, t, "#38387f", 20, `${SANS} text-anchor="middle" font-weight="300"`);
  }

  static art(kind){
    const Y = "#ffff00", K = "#000", O = "#bcbc40", S = "Liberation Serif";
    const dk = "#3c4c58";
    const serif = (x, y, t, extra = "") => tx(x, y, t, "#fff", 17, `font-family="${S}" text-anchor="middle" ${extra}`);
    if (kind === "rect") return `
      <rect x="17.300" y="22.300" width="110" height="55" fill="none" stroke="${Y}"/>
      ${ln(3.7, 22, 3.7, 77.5, K)}${ln(0, 22.3, 12.7, 22.3, K)}${ln(0, 77.3, 12.7, 77.3, K)}
      ${ShapeTile.hatch(58.3, 42.3, 21.7, 13.4)}
      ${tx(71.3, 90, "B", "#fff", 10, `${MONO} font-weight="bold" text-anchor="middle"`)}
      ${ln(17.3, 91.3, 122, 91.3, K)}${ln(17.3, 82, 17.3, 95, K)}
      ${tx(74.5, 115, "矩形承台", "#2c2c80", 14, `${SANS} text-anchor="middle"`)}`;
    if (kind === "tri1") return ShapeTile.tri({
      outline: "53.300,32.300 72,32.300 112,90.300 103,106.300 22.700,106.300 13.300,90.300",
      circles: [[62.3, 52], [38.3, 90], [86.3, 90]], box: [54.7, 70.7, 15.3, 9.6],
      red: [59.3, 90.3, 43.5, 43.5], x4: [53.7, 72, 26], rx: 120.7, ry: [32.3, 53, 90.3, 106.3],
      bx: [4.7, 120], by: 117.3, bt: [16.7, 22.7, 38.7, 86.7, 102.7, 108.7],
      bl: [[8.3, "x1"], [29.7, "x2"], [61.3, "x3"], [93, "x2"], [113, "x1"]], cap: [64.7, 131, "三桩承台一"]
    });
    if (kind === "tri2") return ShapeTile.tri({
      outline: "51.700,28.300 70,28.300 110,86.700 101,103.300 20.700,103.300 10.700,86.700",
      circles: [[60.3, 48.7], [36.3, 86.7], [84.3, 86.7]], box: [53.7, 66.3, 16.3, 9],
      red: [65, 68.7, 48.7, 58.7], x4: [51.7, 70, 22.7], rx: 119, ry: [28.3, 49.3, 87.3, 103.3],
      bx: [2.3, 118.3], by: 113.3, bt: [14.7, 20.7, 36.7, 84.7, 100.7, 106.7],
      bl: [[6.3, "x1"], [27.3, "x2"], [59.7, "x3"], [91.3, "x2"], [111.3, "x1"]], cap: [62.3, 128, "三桩承台二"]
    });
    if (kind === "four") return `
      ${ShapeTile.head("阶式四桩台")}
      <rect x="34.700" y="45.300" width="65.300" height="64.400" fill="none" stroke="${O}" stroke-width="1.200"/>
      ${ShapeTile.hatch(62.7, 70.3, 9.3, 14.4, O, true)}
      ${ShapeTile.arrows(24.3, 45.7, 24.3, 109)}${ln(17.3, 45.3, 32, 45.3, dk)}${ln(17.3, 109.3, 32, 109.3, dk)}
      ${serif(13, 81, "A")}
      ${ShapeTile.arrows(35.3, 118.7, 98.7, 118.7)}${ln(35.3, 112, 35.3, 126, dk)}${ln(98.7, 112, 98.7, 126, dk)}
      ${serif(69, 135, "A")}`;
    const formula = (x, t) => tx(x, 134, t, "#fff", 13.3, `font-family="Liberation Mono" textLength="80"`);
    if (kind === "five") return `
      ${ShapeTile.head("阶式五桩台")}
      ${poly("74,43.300 110.300,67.700 96.300,107.700 51.700,107.700 38.300,67.700", O, 1.1)}
      ${ShapeTile.hatch(66.7, 71, 15, 9, O)}
      ${ShapeTile.arrows(31, 44.3, 31, 108.3)}${ln(24.3, 44.3, 39, 44.3, dk)}${ln(24.3, 108.3, 39, 108.3, dk)}
      ${serif(15.7, 73.3, "A", `transform="rotate(-90 15.700 73.300)"`)}
      ${ShapeTile.arrows(52.3, 117.7, 96.3, 117.7)}${ln(52.3, 111, 52.3, 125, dk, 1.5)}${ln(96.3, 111, 96.3, 125, dk, 1.5)}
      ${formula(40, "B=A/1.5385")}`;
    return `
      ${ShapeTile.head("阶式六桩台")}
      ${poly("60.300,43.300 96.700,43.300 115.300,75 96.700,107.700 60.300,107.700 41.700,75", O, 1.1)}
      ${ShapeTile.hatch(71.3, 70.3, 14.7, 9.4, O)}
      ${ShapeTile.arrows(37.3, 43.3, 37.3, 107.3)}${ln(30.7, 43.3, 45.3, 43.3, dk)}${ln(30.7, 107.3, 45.3, 107.3, dk)}
      ${serif(22.3, 72, "A", `transform="rotate(-90 22.300 72)"`)}
      ${ShapeTile.arrows(60.3, 117, 96.7, 117)}${ln(60.3, 110, 60.3, 124, dk, 1.5)}${ln(96.7, 110, 96.7, 124, dk, 1.5)}
      ${formula(42, "B=A/1.7326")}`;
  }
}

class ScrollBar extends HTMLElement {
  constructor(){
    super();
    const btn = d => `<div class="b"><svg width="9" height="7" viewBox="0 0 9 7"><path d="${d}" fill="none" stroke="#2b4d8c" stroke-width="2"/></svg></div>`;
    this.attachShadow({mode: "open"}).innerHTML = `
      <style>
        :host{display:flex;flex-direction:column;width:16px;height:452px;flex:none;background:#f6f5ee}
        .b{height:16px;flex:none;box-sizing:border-box;border:1px solid #fff;border-radius:2px;background:linear-gradient(#dce6fe,#bccefa);display:flex;align-items:center;justify-content:center;box-shadow:0 0 0 0 #000}
        .t{height:156px;margin-top:2px;box-sizing:border-box;border:1px solid #fff;border-radius:2px;background:#bdd0fb;display:flex;align-items:center;justify-content:center}
        .g{width:6px;height:8px;background:repeating-linear-gradient(#eef3ff 0 1px,#8aa6e4 1px 2px)}
        .s{flex:1}
      </style>
      ${btn("M1 6l3.500-4 3.500 4")}<div class="t"><div class="g"></div></div><div class="s"></div>${btn("M1 1l3.500 4 3.500-4")}`;
  }
}

class ParamBody extends HTMLElement {
  constructor(){
    super();
    this.attachShadow({mode: "open"}).innerHTML = `
      <style>
        :host{display:flex;flex:1;min-height:0;background:#ece9d8}
        .left{width:290px;flex:none;box-sizing:border-box;padding:2px 2px 0;display:flex;flex-direction:column;border-right:0}
        fieldset{margin:0;padding:5px 0 0 3px;height:469px;box-sizing:border-box;border:1px solid #d0d0bf;border-radius:4px;min-width:0}
        legend{padding:0 1px;margin-left:5px;color:#0046d5;line-height:14px}
        .in{display:flex;gap:6px}
        .grid{display:grid;grid-template-columns:127px 127px;grid-auto-rows:146px;gap:4px}
        scroll-bar{margin-top:-4px}
        .right{flex:1;display:flex;flex-direction:column;min-width:0}
        .top{height:30px;flex:none;background:#f1efe5;margin-left:0;border-bottom:1px solid #aca899;box-sizing:border-box}
        .draw{height:433px;flex:none;border-left:1px solid #f4f3ea}
        .bot{flex:1;display:flex;align-items:center;background:#ece9d8;padding-top:10px}
      </style>
      <div class="left">
        <fieldset>
          <legend>图形</legend>
          <div class="in">
            <div class="grid"><slot name="tile"></slot></div>
            <scroll-bar></scroll-bar>
          </div>
        </fieldset>
      </div>
      <div class="right">
        <div class="top"></div>
        <div class="draw"><slot name="side"></slot></div>
        <div class="bot"><slot name="action"></slot></div>
      </div>`;
  }
}

customElements.define("app-icon", AppIcon);
customElements.define("mono-text", MonoText);
customElements.define("new-badge", NewBadge);
customElements.define("app-frame", AppFrame);
customElements.define("top-bar", TopBar);
customElements.define("tool-row", ToolRow);
customElements.define("tool-item", ToolItem);
customElements.define("tool-grip", ToolGrip);
customElements.define("tool-sep", ToolSep);
customElements.define("drop-arrow", DropArrow);
customElements.define("combo-box", ComboBox);
customElements.define("dock-panel", DockPanel);
customElements.define("nav-button", NavButton);
customElements.define("mini-bar", MiniBar);
customElements.define("tree-view", TreeView);
customElements.define("tree-row", TreeRow);
customElements.define("list-tools", ListTools);
customElements.define("search-box", SearchBox);
customElements.define("float-window", FloatWindow);
customElements.define("prop-table", PropTable);
customElements.define("radio-bar", RadioBar);
customElements.define("push-button", PushButton);
customElements.define("action-bar", ActionBar);
customElements.define("cad-plan", CadPlan);
customElements.define("section-drawing", SectionDrawing);
customElements.define("side-drawing", SideDrawing);
customElements.define("shape-tile", ShapeTile);
customElements.define("scroll-bar", ScrollBar);
customElements.define("param-body", ParamBody);
</script>
</body>
</html>
